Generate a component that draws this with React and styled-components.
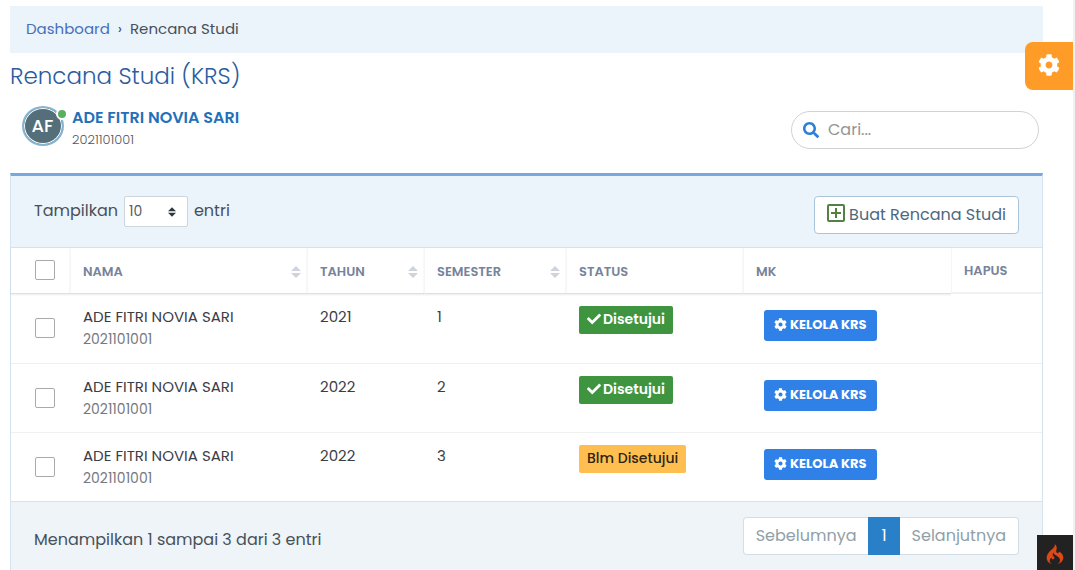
import { useState } from 'react';
import styled, { createGlobalStyle } from 'styled-components';
import { FaCog, FaSearch, FaCheck } from 'react-icons/fa';
import { SiCodeigniter } from 'react-icons/si';

const GlobalStyle = createGlobalStyle`
* {
  box-sizing: border-box;
}
body {
  margin: 0;
  background: #fff;
  color: #47505a;
  font-family: Poppins, Inter, "Liberation Sans", sans-serif;
  font-size: 16px;
  line-height: 24px;
}
button, input, select {
  font-family: inherit;
}
`;

const Page = styled.main`
min-height: 100vh;
padding: 6px 30px 0 10px;
border-right: 2px solid #f1f1f2;
`;

const Breadcrumb = styled.nav`
display: flex;
align-items: center;
height: 47px;
padding: 0 16px 2px;
gap: 8px;
background: #ebf3fb;
font-size: 15px;
`;

const CrumbLink = styled.a`
color: #4570b8;
text-decoration: none;
`;

const Title = styled.h1`
margin: 8px 0 0;
font-size: 23px;
font-weight: 300;
line-height: 30px;
color: #2a5ca0;
`;

const Profile = styled.section`
display: flex;
align-items: center;
justify-content: space-between;
height: 82px;
padding: 0 4px 4px 12px;
`;

const User = styled.div`
display: flex;
align-items: center;
gap: 8px;
padding-bottom: 3px;
`;

const Avatar = styled.div`
position: relative;
display: flex;
align-items: center;
justify-content: center;
width: 42px;
height: 40px;
margin-bottom: 6px;
padding-right: 1px;
border: 2px solid #86b4d0;
border-radius: 50%;
background: #546e7a;
box-shadow: inset 0 0 0 1px #fff;
color: #fff;
font-size: 18px;
font-weight: 500;
`;

const Online = styled.span`
position: absolute;
top: 0;
right: -6px;
width: 12px;
height: 12px;
border: 2px solid #fff;
border-radius: 50%;
background: #58b05c;
`;

const UserName = styled.div`
color: #2470b8;
font-size: 16px;
font-weight: 600;
line-height: 22px;
`;

const UserId = styled.div`
color: #555;
font-size: 13px;
font-weight: 300;
line-height: 22px;
`;

const Search = styled.label`
display: flex;
align-items: center;
gap: 7px;
width: 248px;
height: 38px;
padding: 0 11px 1px;
border: 1px solid #d0d3d6;
border-radius: 19px;
color: #2b7fd8;
`;

const SearchInput = styled.input`
flex: 1;
min-width: 0;
border: 0;
outline: 0;
background: none;
color: #555;
font-size: 16px;

&::placeholder {
  color: #949494;
}
`;

const Card = styled.section`
border: 1px solid #d5e3ee;
border-top: 3px solid #78a8e0;
border-bottom: 0;
`;

const Toolbar = styled.div`
display: flex;
align-items: flex-start;
justify-content: space-between;
height: 72px;
padding: 20px 23px 0;
border-bottom: 1px solid #d5e3ee;
background: #ebf3fb;
`;

const Length = styled.label`
display: flex;
align-items: flex-start;
gap: 6px;
line-height: 29px;
`;

const LengthBox = styled.span`
display: grid;
align-items: center;
color: #2f3640;

> * {
  grid-area: 1 / 1;
}
> svg {
  justify-self: end;
  margin-right: 12px;
  pointer-events: none;
}
`;

const LengthSelect = styled.select`
appearance: none;
width: 64px;
height: 31px;
padding: 0 4px 1px;
border: 1px solid #ccd6de;
border-radius: 2px;
background: #fff;
color: #555c66;
font-size: 14px;
`;

const CreateButton = styled.button`
display: flex;
align-items: center;
gap: 4px;
height: 38px;
padding: 0 12px 2px;
border: 1px solid #a9c5dc;
border-radius: 4px;
background: #fff;
color: #4d6880;
font-size: 16px;

> svg {
  margin-bottom: 2px;
}
`;

const Table = styled.table`
width: 100%;
table-layout: fixed;
border-collapse: separate;
border-spacing: 0;
`;

const Col = styled.col`
width: ${({ $w }) => ($w ? `${$w}px` : 'auto')};
`;

const Th = styled.th`
height: 46px;
padding: 2px 6px 0 12px;
border-bottom: ${({ $plain }) => ($plain ? '2px solid #eff2f4' : '1px solid #d9e1e8')};
border-left: ${({ $first }) => ($first ? '0' : '1px solid #f3f5f7')};
box-shadow: ${({ $plain }) => ($plain ? 'none' : '0 1px 2px rgba(0, 0, 0, 0.08)')};
background: #fff;
color: #76839b;
font-size: 13px;
font-weight: 600;
line-height: 24px;
text-align: left;
`;

const HeadCell = styled(Th)`
padding: 0 0 2px;
`;

const ThInner = styled.div`
display: flex;
align-items: center;
justify-content: space-between;
color: inherit;

> svg {
  color: #cfd4da;
}
`;

const Td = styled.td`
height: 69px;
padding: 12px 8px 0 13px;
border-top: ${({ $line }) => ($line ? '1px solid #eef0f2' : '0')};
color: #3d3d45;
font-size: 15px;
line-height: 22px;
vertical-align: top;
`;

const CheckCell = styled(Td)`
padding: 0 0 1px;
vertical-align: middle;
`;

const NameId = styled.div`
color: #757980;
font-size: 14px;
`;

const Check = styled.input`
appearance: none;
display: block;
width: 20px;
height: 20px;
margin: 0 0 0 24px;
border: 1px solid #aaa;
border-radius: 2px;
background: #fff;

&:checked {
  background: #2b80e8;
}
`;

const Badge = styled.span`
display: inline-flex;
align-items: center;
gap: 2px;
height: 28px;
padding: 0 8px 2px;
border-radius: 2px;
background: ${({ $ok }) => ($ok ? '#3f9440' : '#ffbf50')};
color: ${({ $ok }) => ($ok ? '#fff' : '#2f2410')};
font-size: 14px;
font-weight: ${({ $ok }) => ($ok ? 600 : 500)};
`;

const ManageButton = styled.button`
display: flex;
align-items: center;
gap: 3px;
height: 31px;
margin: 4px 0 0 8px;
padding: 0 10px 2px;
border: 0;
border-radius: 3px;
background: #2f80e7;
color: #fff;
font-size: 13px;
font-weight: 700;
white-space: nowrap;
`;

const Footer = styled.footer`
display: flex;
align-items: center;
justify-content: space-between;
padding: 15px 23px;
border-top: 1px solid #d5e3ee;
background: #eef4f8;
`;

const Info = styled.div`
padding-top: 8px;
`;

const Pager = styled.nav`
display: flex;
`;

const PageButton = styled.button`
height: 38px;
padding: 0 12px 2px;
border: 1px solid ${({ $active }) => ($active ? '#2a80c8' : '#d3dee6')};
border-left-width: ${({ $side }) => ($side === 'right' ? '0' : '1px')};
border-right-width: ${({ $side }) => ($side === 'left' ? '0' : '1px')};
border-radius: ${({ $side }) => ({ left: '4px 0 0 4px', right: '0 4px 4px 0' }[$side] || '0')};
background: ${({ $active }) => ($active ? '#2a80c8' : '#fff')};
color: ${({ $active }) => ($active ? '#fff' : '#8fa0a8')};
font-size: 16px;
`;

const Settings = styled.button`
position: fixed;
top: 42px;
right: 2px;
display: flex;
align-items: center;
justify-content: center;
width: 48px;
height: 48px;
padding: 0 0 2px;
border: 0;
border-radius: 8px 0 0 8px;
background: #ff9c27;
color: #fff;
`;

const DebugBar = styled.button`
position: fixed;
right: 2px;
bottom: 0;
display: flex;
align-items: center;
justify-content: center;
width: 36px;
height: 35px;
padding: 2px 0 0;
border: 0;
background: #222;
color: #dd4814;
`;

const columns = [
  { title: 'NAMA', sort: true },
  { title: 'TAHUN', sort: true, width: 117 },
  { title: 'SEMESTER', sort: true, width: 142 },
  { title: 'STATUS', width: 177 },
  { title: 'MK', width: 208 },
  { title: 'HAPUS', width: 91, plain: true },
];

const rows = [
  { id: 1, name: 'ADE FITRI NOVIA SARI', nim: '2021101001', year: 2021, semester: 1, ok: true },
  { id: 2, name: 'ADE FITRI NOVIA SARI', nim: '2021101001', year: 2022, semester: 2, ok: true },
  { id: 3, name: 'ADE FITRI NOVIA SARI', nim: '2021101001', year: 2022, semester: 3, ok: false },
];

function SortIcon({ width = 10, height = 12 }) {
  return (
    <svg width={width} height={height} viewBox="0 0 10 12" fill="currentColor" aria-hidden="true">
      <path d="M5 0 10 5H0zM5 12 0 7h10z" />
    </svg>
  );
}

function PlusSquare() {
  return (
    <svg width="18" height="18" viewBox="0 0 18 18" fill="none" stroke="#558043" strokeWidth="2" aria-hidden="true">
      <rect x="1" y="1" width="16" height="16" rx="1" />
      <path d="M9 4v10M4 9h10" />
    </svg>
  );
}

function App() {
  const [selected, setSelected] = useState([]);

  const toggle = (id) => {
    setSelected(selected.includes(id) ? selected.filter((el) => el !== id) : [...selected, id]);
  };

  const toggleAll = () => {
    setSelected(selected.length === rows.length ? [] : rows.map((el) => el.id));
  };

  return (
    <>
      <GlobalStyle />
      <Page>
        <Breadcrumb>
          <CrumbLink href="#dashboard">Dashboard</CrumbLink>
          <span>›</span>
          <span>Rencana Studi</span>
        </Breadcrumb>
        <Title>Rencana Studi (KRS)</Title>
        <Profile>
          <User>
            <Avatar>AF<Online /></Avatar>
            <div>
              <UserName>ADE FITRI NOVIA SARI</UserName>
              <UserId>2021101001</UserId>
            </div>
          </User>
          <Search>
            <FaSearch size={16} />
            <SearchInput type="text" placeholder="Cari..." aria-label="Cari" />
          </Search>
        </Profile>
        <Card>
          <Toolbar>
            <Length>
              Tampilkan
              <LengthBox>
                <LengthSelect defaultValue="10">
                  <option>10</option>
                  <option>25</option>
                  <option>50</option>
                </LengthSelect>
                <SortIcon width={8} height={10} />
              </LengthBox>
              entri
            </Length>
            <CreateButton><PlusSquare />Buat Rencana Studi</CreateButton>
          </Toolbar>
          <Table>
            <colgroup>
              <Col $w={59} />
              {columns.map((el) => <Col key={el.title} $w={el.width} />)}
            </colgroup>
            <thead>
              <tr>
                <HeadCell $first>
                  <Check type="checkbox" aria-label="Pilih semua" checked={selected.length === rows.length} onChange={toggleAll} />
                </HeadCell>
                {columns.map((el) => (
                  <Th key={el.title} $plain={el.plain}>
                    <ThInner>{el.title}{el.sort && <SortIcon />}</ThInner>
                  </Th>
                ))}
              </tr>
            </thead>
            <tbody>
              {rows.map((el, i) => (
                <tr key={el.id}>
                  <CheckCell $line={i > 0}>
                    <Check type="checkbox" aria-label={el.name} checked={selected.includes(el.id)} onChange={() => toggle(el.id)} />
                  </CheckCell>
                  <Td $line={i > 0}>
                    {el.name}
                    <NameId>{el.nim}</NameId>
                  </Td>
                  <Td $line={i > 0}>{el.year}</Td>
                  <Td $line={i > 0}>{el.semester}</Td>
                  <Td $line={i > 0}>
                    <Badge $ok={el.ok}>{el.ok && <FaCheck size={14} />}{el.ok ? 'Disetujui' : 'Blm Disetujui'}</Badge>
                  </Td>
                  <Td $line={i > 0}>
                    <ManageButton><FaCog size={13} />KELOLA KRS</ManageButton>
                  </Td>
                  <Td $line={i > 0} />
                </tr>
              ))}
            </tbody>
          </Table>
          <Footer>
            <Info>Menampilkan 1 sampai 3 dari 3 entri</Info>
            <Pager>
              <PageButton $side="left">Sebelumnya</PageButton>
              <PageButton $active>1</PageButton>
              <PageButton $side="right">Selanjutnya</PageButton>
            </Pager>
          </Footer>
        </Card>
      </Page>
      <Settings aria-label="Pengaturan"><FaCog size={22} /></Settings>
      <DebugBar aria-label="Debug"><SiCodeigniter size={20} /></DebugBar>
    </>
  );
}

export default App;
